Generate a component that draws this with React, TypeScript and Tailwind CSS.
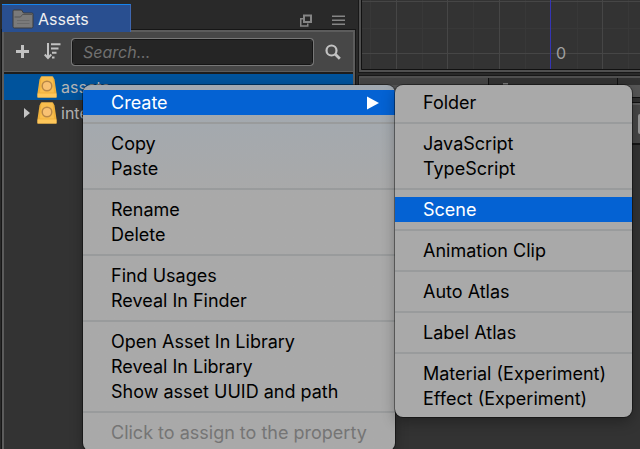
import React from "react";

type Entry = { label: string; active?: boolean; disabled?: boolean; submenu?: boolean } | "separator";

const mainMenu: Entry[] = [
  { label: "Create", active: true, submenu: true },
  "separator",
  { label: "Copy" },
  { label: "Paste" },
  "separator",
  { label: "Rename" },
  { label: "Delete" },
  "separator",
  { label: "Find Usages" },
  { label: "Reveal In Finder" },
  "separator",
  { label: "Open Asset In Library" },
  { label: "Reveal In Library" },
  { label: "Show asset UUID and path" },
  "separator",
  { label: "Click to assign to the property", disabled: true },
];

const createMenu: Entry[] = [
  { label: "Folder" },
  "separator",
  { label: "JavaScript" },
  { label: "TypeScript" },
  "separator",
  { label: "Scene", active: true },
  "separator",
  { label: "Animation Clip" },
  "separator",
  { label: "Auto Atlas" },
  "separator",
  { label: "Label Atlas" },
  "separator",
  { label: "Material (Experiment)" },
  { label: "Effect (Experiment)" },
];

function Menu({ entries, className, label }: { entries: Entry[]; className: string; label: string }) {
  return (
    <div
      role="menu"
      aria-label={label}
      className={`absolute overflow-hidden rounded-lg pt-[5px] pb-[6px] text-lg leading-[25px] text-black shadow-[0_0_0_1px_rgba(0,0,0,0.4),0_5px_14px_rgba(0,0,0,0.3)] ${className}`}
    >
      {entries.map((entry, i) =>
        entry === "separator" ? (
          <div key={i} role="separator" className="flex h-4 items-center">
            <div className="h-[2px] w-full bg-[#999b9c]" />
          </div>
        ) : (
          <button
            key={i}
            type="button"
            role="menuitem"
            disabled={entry.disabled}
            className={`flex h-[25px] w-full items-center justify-between whitespace-nowrap pr-4 pl-7 text-left ${
              entry.active ? "bg-[#0462d3] text-white" : entry.disabled ? "text-[#757575]" : ""
            }`}
          >
            {entry.label}
            {entry.submenu && (
              <svg width="12" height="14" viewBox="0 0 12 14" fill="currentColor" aria-hidden="true">
                <path d="M0 .5 12 7 0 13.5z" />
              </svg>
            )}
          </button>
        ),
      )}
    </div>
  );
}

function DatabaseIcon() {
  return (
    <svg width="20" height="22" viewBox="0 0 20 22" aria-hidden="true">
      <path d="M4 .5h12l1.500 3 2 13.500v4.500H.5V17l2-13.500z" fill="#eeb03c" />
      <path d="M4.500 .5h11l1.500 16H3z" fill="#f9be4e" />
      <path d="M.5 17.500h19V21q0 .5-.5 .5H1q-.5 0-.5-.5z" fill="#ffc75a" />
      <circle cx="10" cy="10" r="4.800" fill="#f8c173" stroke="#b88746" strokeWidth="1.500" />
    </svg>
  );
}

function AssetsPanel() {
  return (
    <section className="flex w-[355px] shrink-0 flex-col pt-1 pl-[2px]">
      <header className="flex h-[26px] shrink-0 items-stretch justify-between">
        <button
          type="button"
          className="relative -mb-[2px] flex w-[129px] items-center gap-1 border-t border-r border-t-[#1684ee] border-r-[#3f67b0] bg-[#294f90] pl-[10px] text-base text-[#f0f0f0]"
        >
          <svg width="22" height="20" viewBox="0 0 22 20" aria-hidden="true">
            <path d="M1 2q0-1 1-1h7.500l2 3H20q1 0 1 1v12.500q0 1.500-1.500 1.500h-17Q1 19 1 17.500z" fill="#7a7a7a" stroke="#3c3c3c" />
            <path d="M2.500 8h6l2-2.500h9.500" fill="none" stroke="#555" />
            <path d="M5 11.500h12.500M5 14.500h12.500" fill="none" stroke="#6a6a6a" />
          </svg>
          Assets
        </button>
        <div className="flex items-center gap-5 pt-[7px] pr-[10px] text-[#858585]">
          <button type="button" aria-label="Pop out">
            <svg width="12" height="13" viewBox="0 0 12 13" fill="none" stroke="currentColor" aria-hidden="true">
              <path d="M4 1.500h7v6.500H4z" strokeWidth="2" />
              <path d="M3 4.750H.75v7.250h7V9.500" strokeWidth="1.500" />
            </svg>
          </button>
          <button type="button" aria-label="Panel menu">
            <svg width="13" height="11" viewBox="0 0 13 11" stroke="currentColor" strokeWidth="1.500" aria-hidden="true">
              <path d="M0 1.250h13M0 5.250h13M0 9.250h13" />
            </svg>
          </button>
        </div>
      </header>
      <div className="flex min-h-0 flex-1 flex-col border-x-2 border-t-2 border-[#5c5c5c] bg-[#474747] shadow-[0_0_0_1px_#161616]">
        <div className="flex h-[39px] shrink-0 items-center pr-[12px] pl-3 text-[#c2c2c2]">
          <button type="button" aria-label="Create asset">
            <svg width="13" height="13" viewBox="0 0 13 13" stroke="currentColor" strokeWidth="3" aria-hidden="true">
              <path d="M6.500 0v13M0 6.500h13" />
            </svg>
          </button>
          <button type="button" aria-label="Sort assets" className="ml-[15px]">
            <svg width="17" height="17" viewBox="0 0 17 17" fill="none" stroke="currentColor" aria-hidden="true">
              <path d="M4 0v15" strokeWidth="2" />
              <path d="M.750 11.500 4 15l3.250-3.500" strokeWidth="2" />
              <path d="M7 1.250h9.500M7 5.500h7.500M8 9.750h4.500M8 14.500h2.500" strokeWidth="2" />
            </svg>
          </button>
          <input
            type="text"
            aria-label="Search assets"
            placeholder="Search..."
            className="ml-[10px] h-7 min-w-0 flex-1 rounded border-2 border-[#777] bg-[#252525] px-[10px] text-base text-[#ccc] italic outline outline-1 -outline-offset-2 outline-[#151515] placeholder:text-[#707070]"
          />
          <button type="button" aria-label="Search" className="ml-[11px]">
            <svg width="16" height="16" viewBox="0 0 16 16" fill="none" stroke="currentColor" strokeWidth="2.200" aria-hidden="true">
              <circle cx="6.500" cy="6.500" r="5" />
              <path d="m10.300 10.300 4.500 4.500" strokeWidth="2.800" />
            </svg>
          </button>
        </div>
        <div role="tree" aria-label="Assets" className="flex-1 border-t border-t-[#5c5c5c] bg-[#333] text-base text-[#b4b4b4]">
          <div
            role="treeitem"
            aria-selected="true"
            className="flex h-7 items-center gap-1 border-t-2 border-[#1d1d1d] bg-[#00539c] pl-[33px]"
          >
            <DatabaseIcon />
            assets
          </div>
          <div role="treeitem" aria-selected="false" aria-expanded="false" className="flex h-[25px] items-center gap-1 pl-5">
            <svg width="6" height="10" viewBox="0 0 6 10" className="mr-[3px]" aria-hidden="true">
              <path d="M0 0 6 5 0 10z" fill="#c4c4c4" />
            </svg>
            <DatabaseIcon />
            internal
          </div>
        </div>
      </div>
    </section>
  );
}

function SceneView() {
  return (
    <div className="h-[72px] shrink-0 overflow-hidden border-b-2 border-l-2 border-[#505050] bg-[#333] shadow-[0_0_0_1px_#181818]">
      <svg width="100%" height="70" aria-label="Scene grid">
        <path d="M9.500 0v70M61.500 0v70M112.500 0v70M164.500 0v70M216.500 0v70M267.500 0v70M0 28.500h2000" stroke="#383838" />
        <path d="M35.500 0v70M86.500 0v70M138.500 0v70M241.500 0v70M0 1.500h2000M0 53.500h2000" stroke="#464646" />
        <path d="M189.500 0v70" stroke="#3535b5" />
        <path d="M.5 0v69.500H2000" fill="none" stroke="#111" />
        <text x="195" y="59" fill="#a0a0a0" fontSize="16">0</text>
      </svg>
    </div>
  );
}

function LowerPanel() {
  return (
    <div className="mt-1 flex flex-1 flex-col border-t-2 border-l border-[#505050] bg-[#333] shadow-[0_0_0_1px_#181818]">
      <div className="flex h-[7px] shrink-0 bg-[#323232]">
        <div className="w-[129px] border-r border-[#111] bg-[#454545]" />
        <div className="flex w-[129px] items-end border-r border-[#111] pl-[14px]">
          <div className="h-[2px] w-[5px] bg-[#777]" />
        </div>
      </div>
      <div className="h-3 shrink-0 bg-[#565656]" />
      <div className="h-[6px] shrink-0 border-y border-[#111] bg-[#303030]" />
      <div className="flex h-[42px] shrink-0 items-center justify-end border-y-2 border-t-[#5c5c5c] border-b-[#161616] bg-[#474747]">
        <div className="h-5 w-[2px] rounded-l bg-[#999]" />
      </div>
    </div>
  );
}

export default function App() {
  return (
    <main className="relative flex h-screen overflow-hidden bg-[#292929] font-['Inter','Liberation_Sans',sans-serif]">
      <AssetsPanel />
      <section className="ml-1 flex min-w-0 flex-1 flex-col">
        <SceneView />
        <LowerPanel />
      </section>
      <Menu
        label="Asset actions"
        entries={mainMenu}
        className="top-[85px] left-[83px] w-[312px] bg-[#a9a9a9] bg-linear-to-b from-[#a1a9b1] via-[#a9a9a9] via-30% to-[#a9a9a9]"
      />
      <Menu label="Create" entries={createMenu} className="top-[85px] left-[395px] w-[237px] bg-[#a9a9a9]" />
    </main>
  );
}
